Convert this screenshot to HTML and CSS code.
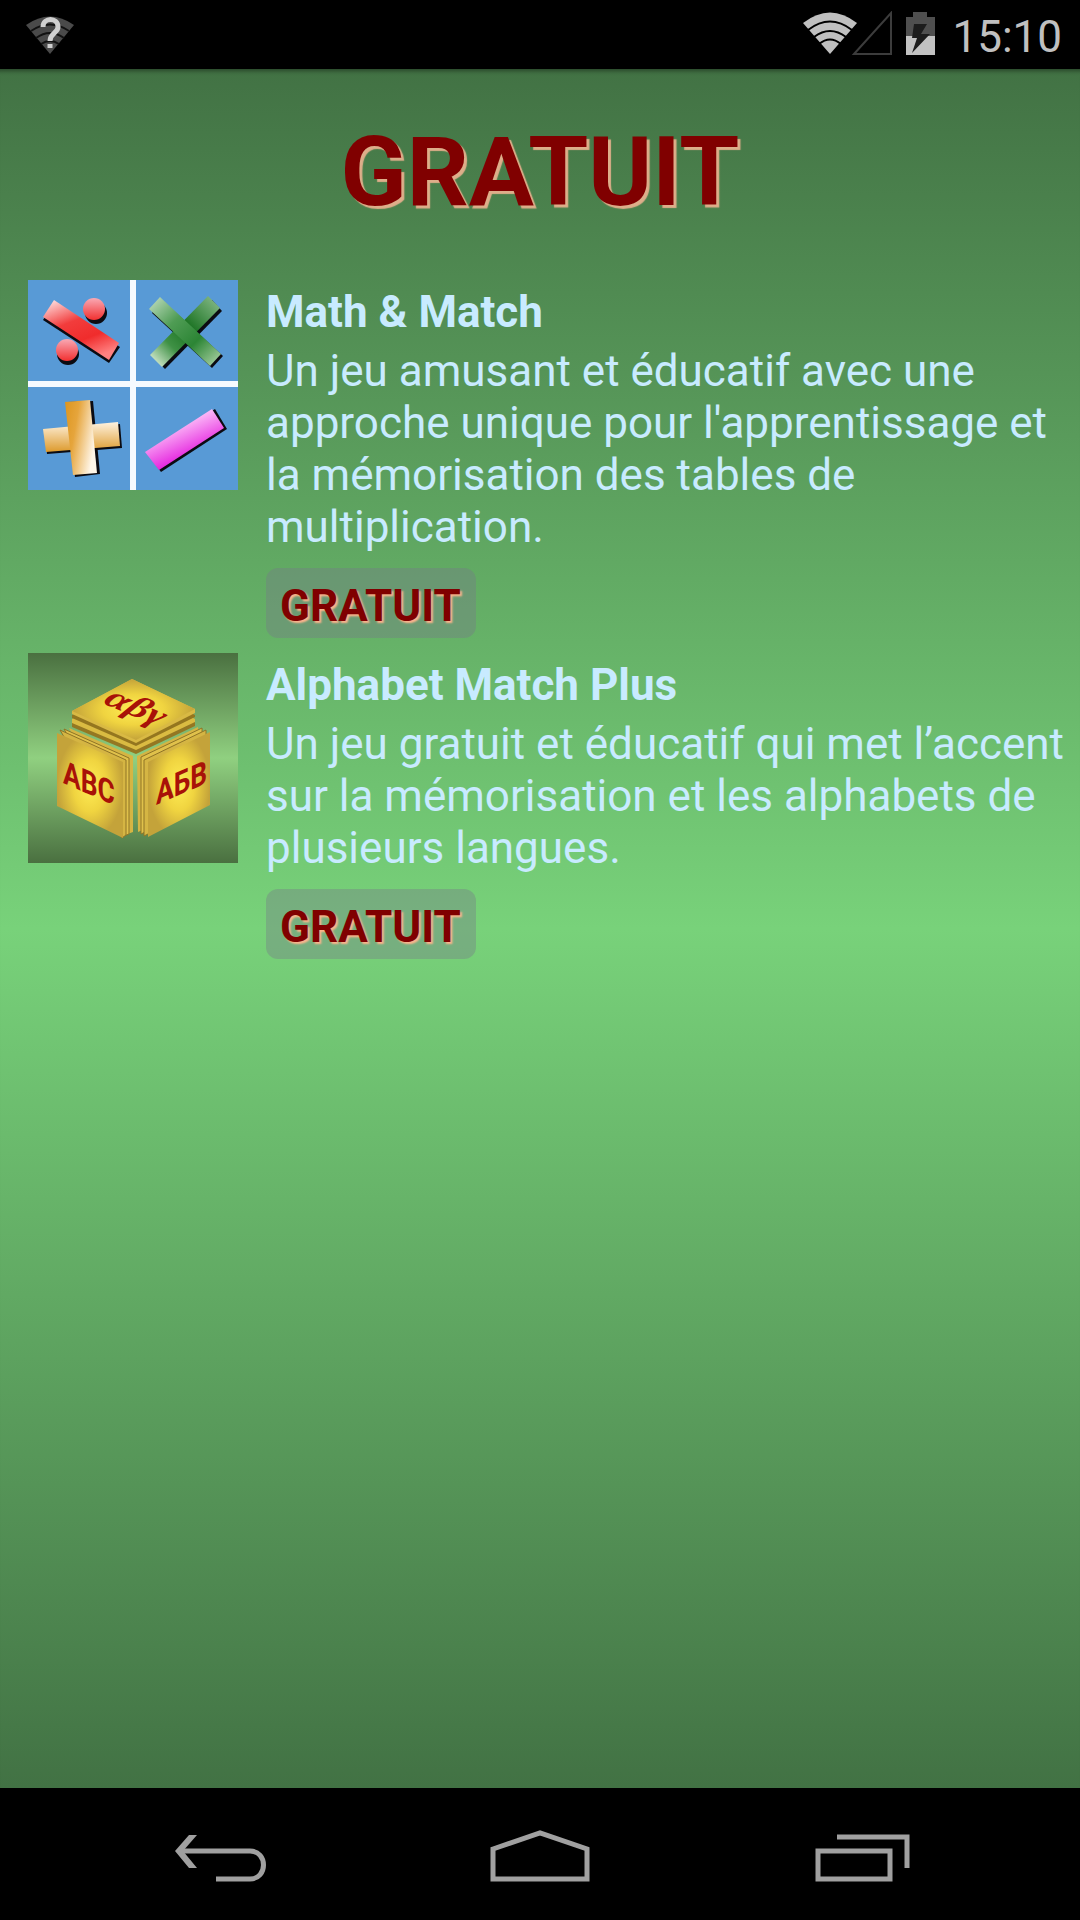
FILE: index.html
```html
<!DOCTYPE html>
<html lang="fr">
<head>
  <meta charset="UTF-8">
  <meta name="viewport" content="width=device-width, initial-scale=1">
  <title>Gratuit</title>
  <link rel="stylesheet" href="styles.css">
</head>
<body>
  <header class="status-bar">
    <svg class="wifi-unknown" width="48" height="40" viewBox="0 0 48 40">
      <path d="M0 10Q24 -7 48 10L24 39Z" fill="#4a4a4a"/>
      <path d="M5 16Q24 3 43 16M10 23Q24 13 38 23M15 29Q24 23 33 29" fill="none" stroke="#111" stroke-width="2"/>
      <path d="M17 12C17 2 32 2 32 12C32 18 24 18 24 26M24 29V33" fill="none" stroke="#d0d0d0" stroke-width="5"/>
    </svg>
    <div class="status-icons">
      <svg width="142" height="48" viewBox="0 4 142 48">
        <path d="M3 16Q30 -5 57 16L30 47Z" fill="#c0c0c0"/>
        <path d="M8 23Q30 6 52 23M14 30Q30 18 46 30M19 37Q30 28 41 37" fill="none" stroke="#000" stroke-width="2"/>
        <path d="M54 47L91 6V47Z" fill="none" stroke="#3c3c3c" stroke-width="2"/>
        <path d="M106 10H113V5H127V10H135V29H106Z" fill="#4f4f4f"/>
        <path d="M106 29H135V48H106Z" fill="#c2c2c2"/>
        <path d="M114 17H127L121 27H130L112 46L117 31H112Z" fill="#1c1c1c"/>
      </svg>
      <span class="clock">15:10</span>
    </div>
  </header>

  <main class="content">
    <h1>GRATUIT</h1>

    <div class="app">
      <svg class="app-icon" viewBox="0 0 210 210">
        <defs>
          <linearGradient id="red" x1="0.1" y1="0" x2="0.6" y2="1">
            <stop offset="0" stop-color="#ffe0e0"/>
            <stop offset="0.4" stop-color="#f23c3c"/>
            <stop offset="0.7" stop-color="#f02c2c"/>
            <stop offset="1" stop-color="#ff8080"/>
          </linearGradient>
          <linearGradient id="red-dot" x1="0" y1="0" x2="0" y2="1">
            <stop offset="0" stop-color="#f9a9b4"/>
            <stop offset="1" stop-color="#f23030"/>
          </linearGradient>
          <linearGradient id="green-back" x1="0" y1="1" x2="1" y2="0">
            <stop offset="0.05" stop-color="#d5ead0"/>
            <stop offset="0.3" stop-color="#3f9145"/>
            <stop offset="0.55" stop-color="#17701f"/>
            <stop offset="1" stop-color="#8fc090"/>
          </linearGradient>
          <linearGradient id="green-front" x1="0" y1="0" x2="1" y2="1">
            <stop offset="0" stop-color="#c5e0c5"/>
            <stop offset="0.35" stop-color="#4f9c54"/>
            <stop offset="0.65" stop-color="#2c8535"/>
            <stop offset="1" stop-color="#b5d8ad"/>
          </linearGradient>
          <linearGradient id="orange" x1="0" y1="0" x2="1" y2="0.4">
            <stop offset="0" stop-color="#dc951e"/>
            <stop offset="0.4" stop-color="#e6a53c"/>
            <stop offset="1" stop-color="#fff6e8"/>
          </linearGradient>
          <linearGradient id="orange-flat" x1="0" y1="0" x2="0" y2="1">
            <stop offset="0" stop-color="#fff3e0"/>
            <stop offset="1" stop-color="#dd9a2c"/>
          </linearGradient>
          <linearGradient id="pink" x1="0.3" y1="0.2" x2="0.65" y2="0.8">
            <stop offset="0" stop-color="#ffd8fc"/>
            <stop offset="1" stop-color="#e312dc"/>
          </linearGradient>
        </defs>
        <rect width="210" height="210" fill="#589ad6"/>
        <path d="M102 0H108V210H102ZM0 101H210V107H0Z" fill="#f5faff"/>
        <g fill="#0b0b12">
          <circle cx="68" cy="33" r="11"/>
          <circle cx="40" cy="74" r="11"/>
          <path d="M15 40L26 24L92 67L81 83Z"/>
          <path d="M184 20L194 31L137 89L125 77Z"/>
          <path d="M133 19L195 76L184 88L124 33Z"/>
          <path d="M17 151L92 144L94 168L19 174Z"/>
          <path d="M40 122L65 121L72 194L47 197Z"/>
          <path d="M119 173L187 129L199 149L133 192Z"/>
        </g>
        <circle cx="66" cy="29" r="11" fill="url(#red-dot)"/>
        <circle cx="39" cy="70" r="11" fill="url(#red-dot)"/>
        <path d="M15 37L26 20L91 63L81 80Z" fill="url(#red)"/>
        <path d="M180 16L192 28L134 87L122 75Z" fill="url(#green-back)"/>
        <path d="M132 17L193 74L182 86L121 29Z" fill="url(#green-front)"/>
        <path d="M15 149L90 142L92 166L18 172Z" fill="url(#orange-flat)"/>
        <path d="M37 122L62 120L69 193L45 195Z" fill="url(#orange)"/>
        <path d="M117 172L184 129L196 148L131 190Z" fill="url(#pink)"/>
      </svg>
      <div class="app-info">
        <h2>Math &amp; Match</h2>
        <p>Un jeu amusant et éducatif avec une approche unique pour l'apprentissage et la mémorisation des tables de multiplication.</p>
        <button class="free">GRATUIT</button>
      </div>
    </div>

    <div class="app">
      <svg class="app-icon" viewBox="0 0 210 210">
        <defs>
          <linearGradient id="backdrop" x1="0" y1="0" x2="0" y2="1">
            <stop offset="0" stop-color="#4a7040"/>
            <stop offset="0.5" stop-color="#90d080"/>
            <stop offset="1" stop-color="#4a7040"/>
          </linearGradient>
          <radialGradient id="gold">
            <stop offset="0" stop-color="#ffed55"/>
            <stop offset="0.5" stop-color="#f0d440"/>
            <stop offset="1" stop-color="#c4a33a"/>
          </radialGradient>
        </defs>
        <rect width="210" height="210" fill="url(#backdrop)"/>
        <!-- top stack -->
        <path d="M44 68L107 42L167 68V73L108 101L44 74Z" fill="#947722"/>
        <path d="M44 66L107 36L167 66V69L108 97L44 70Z" fill="#dabb42"/>
        <path d="M44 62L107 33L167 62V64L108 93L44 65Z" fill="#94761f"/>
        <path d="M44 58L104 26L167 56V60L108 90L44 61Z" fill="#d9b944"/>
        <path d="M44 58L104 26L167 56L108 87Z" fill="url(#gold)"/>
        <!-- left stack -->
        <path d="M41 75L105 103V179L97 182Z" fill="#d5b543"/>
        <path d="M36 76L101 105V181L96 183Z" fill="#e0c14b" stroke="#8f7426"/>
        <path d="M32 77L98 107V182L94 185Z" fill="#d5b543" stroke="#8f7426"/>
        <path d="M29 80L95 109V185L29 153Z" fill="url(#gold)"/>
        <!-- right stack -->
        <path d="M109 103L170 74L173 151L110 179Z" fill="#d5b543"/>
        <path d="M113 104L174 75L176 151L113 181Z" fill="#e0c14b" stroke="#8f7426"/>
        <path d="M116 107L178 77L179 151L116 183Z" fill="#d5b543" stroke="#8f7426"/>
        <path d="M120 109L182 79V152L120 184Z" fill="url(#gold)"/>
        <g class="cube-letters">
          <text class="greek" transform="matrix(0.9 0.38 -0.5 0.6 74 50)">αβγ</text>
          <text transform="matrix(0.88 0.38 0 1.1 35 130)">ABC</text>
          <text transform="matrix(0.88 -0.38 0 1.1 128 152)">АБВ</text>
        </g>
      </svg>
      <div class="app-info">
        <h2>Alphabet Match Plus</h2>
        <p>Un jeu gratuit et éducatif qui met l’accent sur la mémorisation et les alphabets de plusieurs langues.</p>
        <button class="free">GRATUIT</button>
      </div>
    </div>
  </main>

  <nav class="nav-bar">
    <button aria-label="Retour">
      <svg width="104" height="60" viewBox="0 0 104 60">
        <path d="M15 27H84C102 27 102 55 84 55H50" fill="none" stroke="#a0a0a0" stroke-width="5"/>
        <path d="M23 11H31L17 27L31 44H23L9 27Z" fill="#a0a0a0"/>
      </svg>
    </button>
    <button aria-label="Accueil">
      <svg width="104" height="60" viewBox="0 0 104 60">
        <path d="M5 25L52 9L99 25V55H5Z" fill="none" stroke="#a0a0a0" stroke-width="5"/>
      </svg>
    </button>
    <button aria-label="Applications récentes">
      <svg width="104" height="60" viewBox="0 0 104 60">
        <path d="M8 27H80V55H8ZM27 13H97V44" fill="none" stroke="#a0a0a0" stroke-width="5"/>
      </svg>
    </button>
  </nav>
</body>
</html>
```

FILE: styles.css
```css
* {
  box-sizing: border-box;
}

body {
  margin: 0;
  min-height: 100vh;
  display: flex;
  flex-direction: column;
  font-family: Roboto, sans-serif;
  background-color: #000;
}

.status-bar {
  display: flex;
  align-items: center;
  justify-content: space-between;
  height: 69px;
  padding: 0 18px 0 26px;
  background-color: #000;
}

.status-icons {
  display: flex;
  align-items: center;
  gap: 10px;
}

.clock {
  font-size: 44px;
  line-height: 60px;
  padding-top: 4px;
  color: #c0c0c0;
}

.content {
  flex: 1;
  padding: 0 0 16px 28px;
  background: linear-gradient(#427244, #78d27a, #427244);
  box-shadow: inset 0 6px 4px -4px rgba(0, 0, 0, 0.4);
}

h1 {
  margin: 0;
  padding: 47px 28px 51px 0;
  font-size: 97px;
  line-height: 113px;
  text-align: center;
  color: #800000;
  text-shadow: 3px 3px 1px #deae8a;
}

.app {
  display: flex;
  align-items: flex-start;
  gap: 28px;
  margin-bottom: 15px;
}

.app-icon {
  flex: none;
  width: 210px;
  height: 210px;
}

.app-info {
  padding-top: 6px;
  font-size: 44px;
  line-height: 52px;
  color: #c8ebff;
}

.app-info h2 {
  margin: 0 0 7px;
  font-size: 44px;
}

.app-info p {
  margin: 0 0 15px;
}

.free {
  display: block;
  height: 70px;
  padding: 6px 15px 0 14px;
  border: none;
  border-radius: 12px;
  background-color: rgba(118, 122, 136, 0.38);
  font-family: inherit;
  font-size: 44px;
  font-weight: bold;
  color: #800000;
  text-shadow: 2px 2px 2px #ffb48c;
  cursor: pointer;
}

.cube-letters {
  font-family: Roboto, sans-serif;
  font-size: 30px;
  font-weight: bold;
  fill: #a81208;
}

.greek {
  font-family: "Liberation Serif", serif;
  font-size: 42px;
  font-style: italic;
}

.nav-bar {
  display: flex;
  justify-content: center;
  gap: 56px;
  height: 132px;
  background-color: #000;
}

.nav-bar button {
  width: 266px;
  padding: 0;
  border: none;
  background: none;
  cursor: pointer;
}

.nav-bar svg {
  display: block;
  margin: 0 auto;
}
```
